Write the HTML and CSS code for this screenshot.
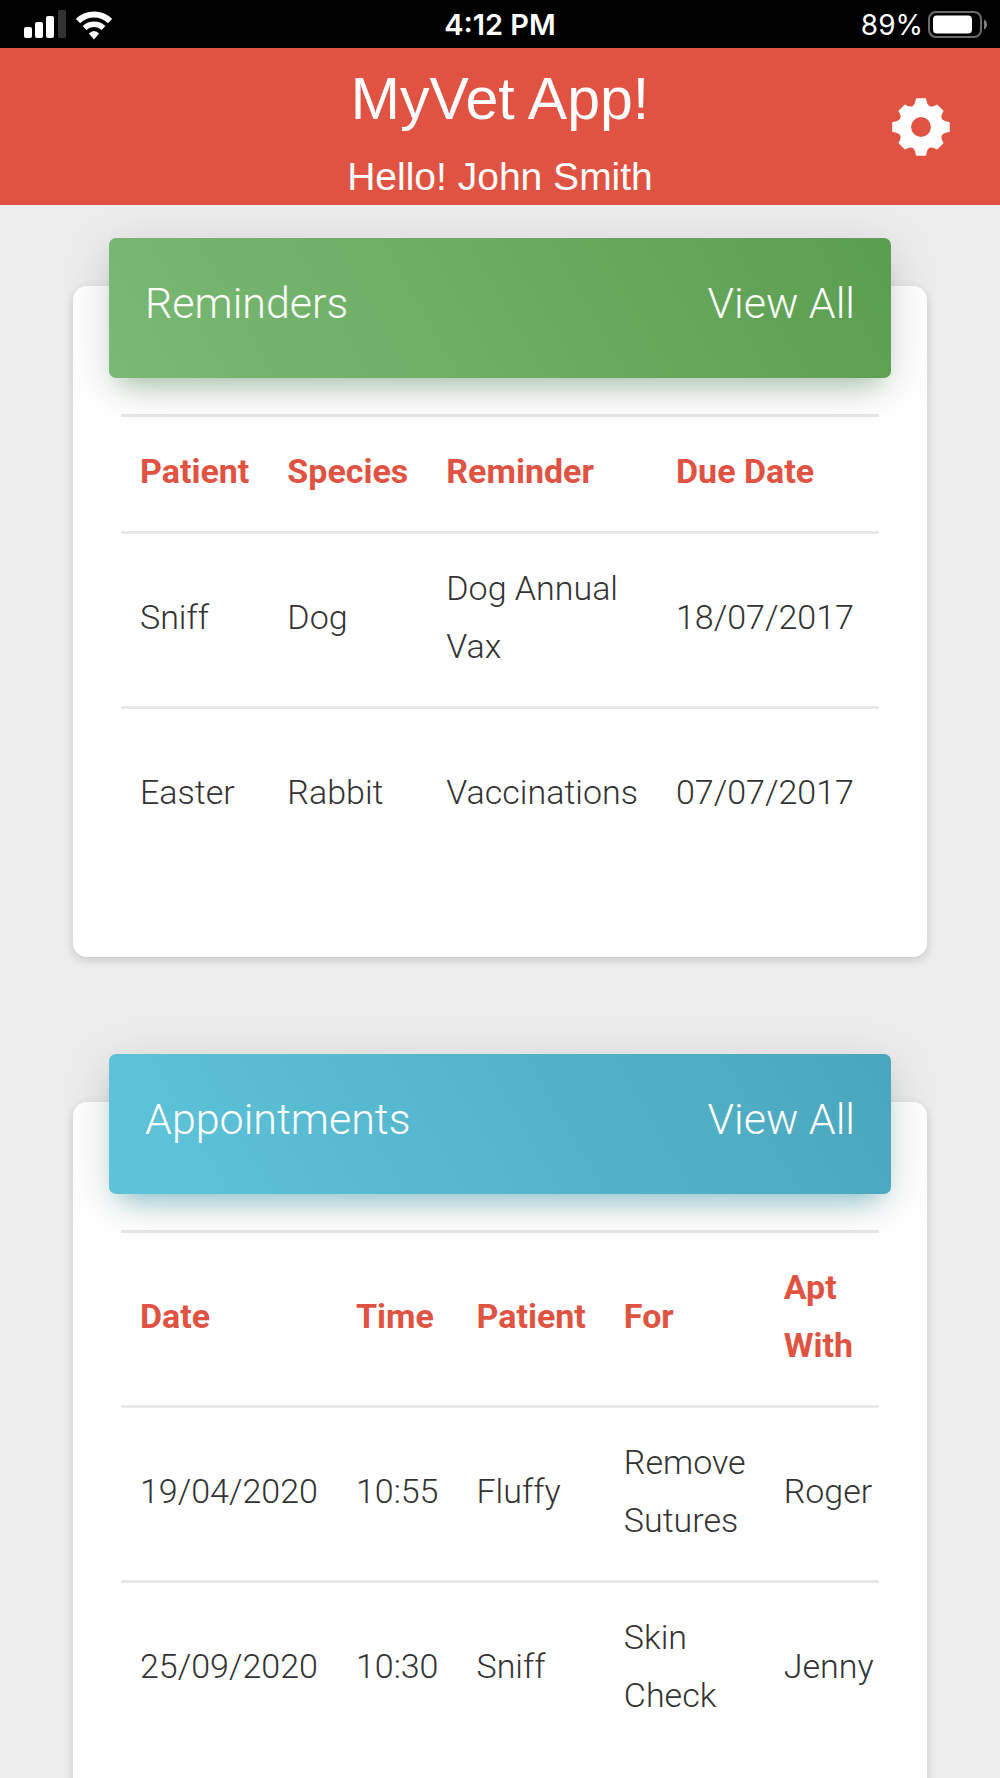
FILE: index.html
```
<!DOCTYPE html>
<html lang="en">
<head>
  <meta charset="UTF-8">
  <meta name="viewport" content="width=device-width, initial-scale=1.0">
  <title>MyVet App!</title>
  <link rel="stylesheet" href="styles.css">
</head>

<body>

  <div class="status-bar">
    <div class="status-left">
      <svg width="42" height="28" viewBox="0 0 42 28" aria-hidden="true">
        <rect x="0" y="17" width="8" height="11" rx="2" fill="#fff" />
        <rect x="11" y="12" width="8" height="16" rx="2" fill="#fff" />
        <rect x="22" y="6" width="8" height="22" rx="2" fill="#fff" />
        <rect x="34" y="0" width="8" height="28" rx="2" fill="#333" />
      </svg>
      <svg width="36" height="30" viewBox="0 0 36 30" aria-hidden="true">
        <g fill="none" stroke="#fff">
          <path d="M2 11A23 23 0 0 1 34 11" stroke-width="6" />
          <path d="M8.500 18A14 14 0 0 1 27.500 18" stroke-width="5.500" />
        </g>
        <path d="M18 29.500L12.800 23.500Q18 18.500 23.200 23.500Z" fill="#fff" />
      </svg>
    </div>
    <span class="status-time">4:12 PM</span>
    <div class="status-right">
      <span>89%</span>
      <svg width="60" height="28" viewBox="0 0 60 28" aria-hidden="true">
        <rect x="1" y="1" width="52" height="25" rx="7" fill="none" stroke="#6b6b6b" stroke-width="2" />
        <rect x="5" y="4.500" width="39" height="18" rx="4" fill="#fff" />
        <path d="M56 8.500Q59 10 59 13.500T56 18.500Z" fill="#808080" />
      </svg>
    </div>
  </div>

  <header class="app-header">
    <h1>MyVet App!</h1>
    <p>Hello! John Smith</p>
    <button class="settings" type="button" aria-label="Settings">
      <svg width="58" height="58" viewBox="-30 -30 60 60" aria-hidden="true">
        <path fill="#fff" fill-rule="evenodd" stroke="#fff" stroke-width="1.500" stroke-linejoin="round" d="M-4.500-29H4.500Q6.500-16 16.500-22.500L22.500-16.500Q16-6.500 29-4.500V4.500Q16 6.500 22.500 16.500L16.500 22.500Q6.500 16 4.500 29H-4.500Q-6.500 16-16.500 22.500L-22.500 16.500Q-16 6.500-29 4.500V-4.500Q-16-6.500-22.500-16.500L-16.500-22.500Q-6.500-16-4.500-29ZM0-11A11 11 0 0 0 0 11A11 11 0 0 0 0-11Z" />
      </svg>
    </button>
  </header>

  <main class="content">
    <section class="card">
      <div class="card-header green">
        <h2>Reminders</h2>
        <a href="#">View All</a>
      </div>
      <div class="table-responsive">
        <table>
          <thead>
            <tr>
              <th>Patient</th>
              <th>Species</th>
              <th>Reminder</th>
              <th class="due-date">Due Date</th>
            </tr>
          </thead>
          <tbody>
            <tr>
              <td>Sniff</td>
              <td>Dog</td>
              <td>Dog Annual Vax</td>
              <td>18/07/2017</td>
            </tr>
            <tr>
              <td>Easter</td>
              <td>Rabbit</td>
              <td>Vaccinations</td>
              <td>07/07/2017</td>
            </tr>
          </tbody>
        </table>
      </div>
    </section>

    <section class="card">
      <div class="card-header blue">
        <h2>Appointments</h2>
        <a href="#">View All</a>
      </div>
      <div class="table-responsive">
        <table>
          <thead>
            <tr>
              <th>Date</th>
              <th>Time</th>
              <th>Patient</th>
              <th>For</th>
              <th>Apt With</th>
            </tr>
          </thead>
          <tbody>
            <tr>
              <td>19/04/2020</td>
              <td>10:55</td>
              <td>Fluffy</td>
              <td>Remove Sutures</td>
              <td>Roger</td>
            </tr>
            <tr>
              <td>25/09/2020</td>
              <td>10:30</td>
              <td>Sniff</td>
              <td>Skin Check</td>
              <td>Jenny</td>
            </tr>
          </tbody>
        </table>
      </div>
    </section>
  </main>

</body>
</html>
```
FILE: styles.css
```
* {
  box-sizing: border-box;
}

body {
  display: flex;
  flex-direction: column;
  height: 100vh;
  margin: 0;
  background-color: #ededed;
  color: #333;
  font-family: Roboto, sans-serif;
  font-size: 34px;
  font-weight: 300;
  line-height: 58px;
}

h1, h2, p {
  margin: 0;
  font-weight: inherit;
}

svg {
  display: block;
}

/* Status bar */
.status-bar {
  display: grid;
  grid-template-columns: 1fr auto 1fr;
  align-items: center;
  flex-shrink: 0;
  height: 48px;
  padding: 2px 12px 0;
  background-color: #000;
  color: #fff;
  font-family: Inter, sans-serif;
  font-size: 28px;
  font-weight: 400;
  line-height: 46px;
}

.status-left {
  display: flex;
  gap: 10px;
  padding-left: 12px;
}

.status-time {
  font-size: 29px;
  font-weight: 600;
}

.status-right {
  display: flex;
  justify-content: flex-end;
  align-items: center;
  gap: 5px;
}

/* App header */
.app-header {
  position: relative;
  flex-shrink: 0;
  padding: 15px 0 6px;
  background-color: #e05342;
  color: #fff;
  font-family: "Liberation Sans", Arial, sans-serif;
  font-weight: 400;
  text-align: center;
}

.app-header h1 {
  margin-bottom: 20px;
  font-size: 59px;
  line-height: 72px;
}

.app-header p {
  font-size: 39px;
  line-height: 44px;
}

.settings {
  position: absolute;
  top: 50%;
  right: 50px;
  transform: translateY(-50%);
  padding: 0;
  border: none;
  background: none;
  cursor: pointer;
}

/* Cards */
.content {
  flex: 1;
  min-height: 0;
  padding: 81px 73px 0;
  overflow-y: auto;
  scrollbar-width: none;
}

.card {
  margin-bottom: 145px;
  padding: 0 36px 76px;
  border-radius: 14px;
  background-color: #fff;
  box-shadow: 0 3px 10px rgba(0, 0, 0, 0.16);
}

.card-header {
  display: flex;
  justify-content: space-between;
  position: relative;
  top: -48px;
  margin-bottom: -12px;
  padding: 36px 36px 46px;
  border-radius: 7px;
  color: #fff;
  font-size: 43px;
}

.card-header h2 {
  font-size: 43px;
}

.card-header a {
  color: #fff;
  text-decoration: none;
}

.green {
  background: linear-gradient(60deg, #7ab974, #5c9e50);
  box-shadow: 0 10px 48px rgba(0, 0, 0, 0.14), 0 17px 24px -12px rgba(76, 155, 80, 0.4);
}

.blue {
  background: linear-gradient(60deg, #5fc4da, #4aa6bd);
  box-shadow: 0 10px 48px rgba(0, 0, 0, 0.14), 0 17px 24px -12px rgba(0, 160, 180, 0.4);
}

/* Tables */
.table-responsive {
  margin: 0 12px;
  overflow-x: auto;
  scrollbar-width: none;
}

table {
  width: 100%;
  border-collapse: separate;
  border-spacing: 0;
}

th, td {
  padding: 25px 19px 31px;
  border-top: 3px solid rgba(0, 0, 0, 0.09);
  text-align: left;
  vertical-align: middle;
}

th {
  color: #e05342;
  font-weight: 700;
}

td {
  height: 175px;
}

.due-date {
  width: 222px;
}
```
